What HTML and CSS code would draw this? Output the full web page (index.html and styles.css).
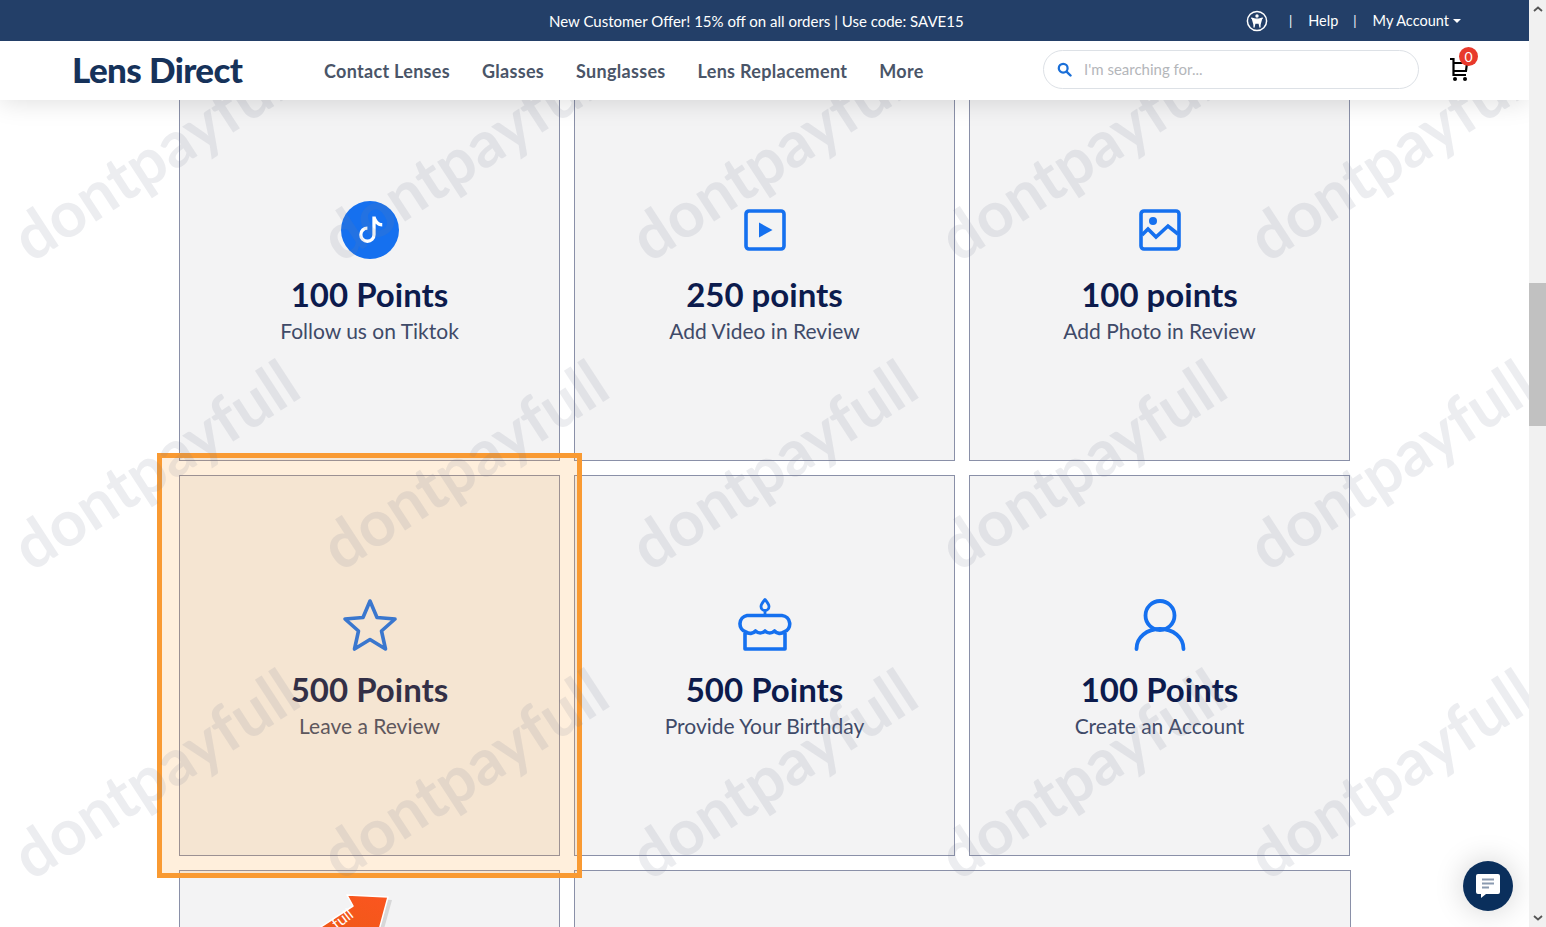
FILE: index.html
```html
<!DOCTYPE html>
<html lang="en">
<head>
<meta charset="utf-8">
<title>Lens Direct</title>
<link rel="stylesheet" href="styles.css">
</head>
<body>
<div class="viewport">
  <header class="header">
    <div class="topbar">
      <span class="offer">New Customer Offer! 15% off on all orders | Use code: SAVE15</span>
      <div class="util">
        <svg class="a11y" viewBox="0 0 22 22" width="22" height="22"><circle cx="11" cy="11" r="9.6" fill="none" stroke="#fff" stroke-width="1.5"/><circle cx="11" cy="6" r="1.7" fill="#fff"/><path d="M5.6 8.2 L9 9.2 V12.6 L8 17 M16.4 8.2 L13 9.2 V12.6 L14 17 M9 9.2 H13 V13 H9Z" fill="#fff" stroke="#fff" stroke-width="1.3" stroke-linecap="round" stroke-linejoin="round"/></svg>
        <span class="sep">|</span>
        <span>Help</span>
        <span class="sep">|</span>
        <span class="account">My Account<i class="caret"></i></span>
      </div>
    </div>
    <div class="navbar">
      <span class="logo">Lens Direct</span>
      <nav class="nav">
        <a>Contact Lenses</a><a>Glasses</a><a>Sunglasses</a><a>Lens Replacement</a><a>More</a>
      </nav>
      <div class="search">
        <svg viewBox="0 0 16 16" width="15" height="15"><circle cx="6.6" cy="6.6" r="4.7" fill="none" stroke="#1a6fd8" stroke-width="2.4"/><path d="M10.2 10.2 L14.4 14.4" stroke="#1a6fd8" stroke-width="2.6" stroke-linecap="round"/></svg>
        <span>I'm searching for...</span>
      </div>
      <div class="cart">
        <svg viewBox="0 0 22 26" width="22" height="26"><path d="M2 3 H5.5 V19 H18 M5.5 7 H19 L18 15 H5.5" fill="none" stroke="#000" stroke-width="2.2"/><circle cx="7" cy="23" r="2" fill="#000"/><circle cx="17" cy="23" r="2" fill="#000"/></svg>
        <span class="badge">0</span>
      </div>
    </div>
  </header>

  <main class="grid">
    <section class="card">
      <div class="ico"><svg viewBox="0 0 58 58" width="58" height="58"><circle cx="29" cy="29" r="29" fill="#1570ef"/><g transform="translate(16.5 15.5) scale(1.65)"><path fill="#fff" d="M9 0h1.98c.144.715.54 1.617 1.235 2.512C12.895 3.389 13.797 4 15 4v2c-1.753 0-3.07-.814-4-1.829V11a5 5 0 1 1-5-5v2a3 3 0 1 0 3 3V0Z"/></g></svg></div>
      <h2>100 Points</h2><p>Follow us on Tiktok</p>
    </section>
    <section class="card">
      <div class="ico"><svg viewBox="0 0 42 42" width="42" height="42"><rect x="2" y="2" width="38" height="38" rx="3" fill="none" stroke="#1570ef" stroke-width="3.6"/><path d="M15 13.5 L28.5 21 L15 28.5Z" fill="#1570ef"/></svg></div>
      <h2>250 points</h2><p>Add Video in Review</p>
    </section>
    <section class="card">
      <div class="ico"><svg viewBox="0 0 42 42" width="42" height="42"><rect x="2" y="2" width="38" height="38" rx="3" fill="none" stroke="#1570ef" stroke-width="3.6"/><circle cx="14" cy="12" r="4" fill="#1570ef"/><path d="M3 26 L9 20 L17 28 L29 17 L39 25" fill="none" stroke="#1570ef" stroke-width="3.6"/></svg></div>
      <h2>100 points</h2><p>Add Photo in Review</p>
    </section>
    <section class="card">
      <div class="ico"><svg viewBox="0 0 56 54" width="56" height="54"><path d="M28 3 L35 19.5 L53 21 L39.5 33 L43.5 51 L28 41.5 L12.500 51 L16.500 33 L3 21 L21 19.500Z" fill="none" stroke="#1570ef" stroke-width="3.6" stroke-linejoin="round"/></svg></div>
      <h2>500 Points</h2><p>Leave a Review</p>
    </section>
    <section class="card">
      <div class="ico"><svg viewBox="0 0 56 54" width="56" height="54"><path d="M28 1.500 C31 5 32 7 32 8.500 A4 4 0 0 1 24 8.500 C24 7 25 5 28 1.500Z M28 13 V17" fill="none" stroke="#1570ef" stroke-width="2.800" stroke-linejoin="round"/><path d="M10 17.500 H45 A8.500 8.500 0 0 1 47 34 A7 7 0 0 1 37.500 33 A7 7 0 0 1 28 33 A7 7 0 0 1 18.500 33 A7 7 0 0 1 9 34 A8.500 8.500 0 0 1 10 17.500Z M8 34 V51 H48 V34" fill="none" stroke="#1570ef" stroke-width="3.600" stroke-linejoin="round"/></svg></div>
      <h2>500 Points</h2><p>Provide Your Birthday</p>
    </section>
    <section class="card">
      <div class="ico"><svg viewBox="0 0 52 54" width="52" height="54"><circle cx="26" cy="17.500" r="14.500" fill="none" stroke="#1570ef" stroke-width="3.800"/><path d="M2.500 51 C2.500 39 13 31 26 31 C39 31 49.500 39 49.500 51" fill="none" stroke="#1570ef" stroke-width="3.800" stroke-linecap="round"/></svg></div>
      <h2>100 Points</h2><p>Create an Account</p>
    </section>
    <section class="card">
      <svg class="arrow" viewBox="0 0 100 40" width="100" height="40"><defs><linearGradient id="ag" x1="0" y1="1" x2="1" y2="0"><stop offset="0" stop-color="#ee5a16"/><stop offset="1" stop-color="#fb5520"/></linearGradient></defs><path d="M3 40 L46 13 L40 2 L82 4 L72 40Z" fill="#bbb" transform="translate(3 2)" opacity=".5"/><path d="M3 40 L46 12 L40 1 L81 3 L71 40Z" fill="url(#ag)" stroke="#fff" stroke-width="1.500" stroke-linejoin="round"/><text class="arrow-text" x="0" y="0" transform="translate(30 36) rotate(-38)">full</text></svg>
    </section>
    <section class="card wide"></section>
  </main>

  <div class="highlight"></div>

  <div class="watermarks" aria-hidden="true">
    <span>dontpayfull</span><span>dontpayfull</span><span>dontpayfull</span><span>dontpayfull</span><span>dontpayfull</span>
    <span>dontpayfull</span><span>dontpayfull</span><span>dontpayfull</span><span>dontpayfull</span><span>dontpayfull</span>
    <span>dontpayfull</span><span>dontpayfull</span><span>dontpayfull</span><span>dontpayfull</span><span>dontpayfull</span>
  </div>

  <button class="chat"><svg viewBox="0 0 26 28" width="26" height="28"><path d="M3 2 H23 A2 2 0 0 1 25 4 V20 A2 2 0 0 1 23 22 H11 L6 26 V22 H3 A2 2 0 0 1 1 20 V4 A2 2 0 0 1 3 2Z" fill="#fff"/><path d="M7 7.500 H19 M7 11.500 H19 M7 15.500 H14" stroke="#8a9ab0" stroke-width="1.800"/></svg></button>
</div>
<aside class="scrollbar">
  <svg viewBox="0 0 10 6" width="10" height="6"><path d="M1 5 L5 1.500 L9 5" fill="none" stroke="#555" stroke-width="1.800"/></svg>
  <div class="track"><div class="thumb"></div></div>
  <svg viewBox="0 0 10 6" width="10" height="6"><path d="M1 1 L5 4.500 L9 1" fill="none" stroke="#555" stroke-width="1.800"/></svg>
</aside>
</body>
</html>
```
FILE: styles.css
```css
* { box-sizing: border-box; }
html, body { margin: 0; height: 927px; overflow: hidden; background: #fff; }
body { display: flex; font-family: "Lato", "Liberation Sans", sans-serif; color: #0c1b4d; }

.viewport { position: relative; width: 1529px; height: 927px; overflow: hidden; flex: none; }

.header { position: absolute; top: 0; left: 0; right: 0; z-index: 3; box-shadow: 0 2px 24px rgba(0,0,0,.13); }
.topbar { height: 41px; background: #233f68; color: #fff; font-size: 15px; position: relative; display: flex; align-items: center; padding-left: 549px; }
.offer { white-space: nowrap; }
.util { position: absolute; left: 1246px; top: 0; height: 41px; display: flex; align-items: center; gap: 15px; font-size: 14.5px; }
.a11y { margin-right: 6px; }
.sep { font-size: 13px; margin-right: 1px; }
.account { display: flex; align-items: center; }
.caret { display: inline-block; margin-left: 4px; border: 4px solid transparent; border-top-color: #fff; border-bottom: 0; }

.navbar { height: 59px; background: #fff; display: flex; align-items: center; padding-left: 72px; }
.logo { width: 252px; font-size: 35px; font-weight: 900; color: #16325a; letter-spacing: -.6px; white-space: nowrap; margin-top: -3px; }
.nav { display: flex; gap: 32px; width: 719px; font-size: 18px; font-weight: 700; color: #4a5568; letter-spacing: .3px; }
.search { width: 376px; height: 39px; margin-top: -3px; border: 1px solid #dde1e6; border-radius: 20px; display: flex; align-items: center; gap: 12px; padding-left: 13px; color: #b4b6ba; font-size: 15px; }
.cart { position: relative; margin-left: 29px; width: 24px; height: 26px; margin-top: -3px; }
.badge { position: absolute; left: 11px; top: -9px; width: 19px; height: 19px; border-radius: 50%; background: #e8392c; color: #fff; font-size: 14px; display: flex; align-items: center; justify-content: center; }

.grid { display: grid; grid-template-columns: repeat(3, 381px); grid-auto-rows: 381px; gap: 14px; padding: 80px 0 0 179px; }
.card { background: #f3f3f4; border: 1px solid #8a90a8; display: flex; flex-direction: column; align-items: center; padding-top: 120px; position: relative; overflow: hidden; }
.card.wide { grid-column: span 2; width: 777px; }
.ico { height: 58px; display: flex; align-items: center; justify-content: center; }
.card h2 { margin: 16px 0 0; font-size: 33px; line-height: 38px; font-weight: 700; color: #0c1b4d; }
.card p { margin: 5px 0 0; font-size: 21px; line-height: 26px; color: #3f4a68; }
.arrow { position: absolute; left: 127px; top: 23px; }
.arrow-text { font-size: 16px; fill: #fff; font-family: "Lato", sans-serif; }

.highlight { position: absolute; left: 157px; top: 453px; width: 425px; height: 425px; border: 5px solid #f99a32; background: rgba(255,153,40,.16); z-index: 1; }

.watermarks { position: absolute; left: 0; top: 0; display: grid; grid-template-columns: repeat(5, 309px); grid-auto-rows: 309px; z-index: 2; pointer-events: none; }
.watermarks span { display: flex; align-items: center; justify-content: center; font-size: 64px; font-weight: 700; color: rgba(120,130,150,.14); transform: rotate(-33deg); white-space: nowrap; overflow: visible; }

.chat { position: absolute; left: 1463px; top: 861px; width: 50px; height: 50px; border: 0; border-radius: 50%; background: #0a2f5c; box-shadow: 0 0 30px rgba(0,0,0,.18); display: flex; align-items: center; justify-content: center; padding: 0; z-index: 4; }

.scrollbar { width: 17px; height: 927px; background: #f1f1f1; display: flex; flex-direction: column; align-items: center; justify-content: space-between; padding: 6px 0; flex: none; }
.track { flex: 1; width: 100%; padding-top: 271px; }
.thumb { height: 143px; background: #c1c1c1; }
```
